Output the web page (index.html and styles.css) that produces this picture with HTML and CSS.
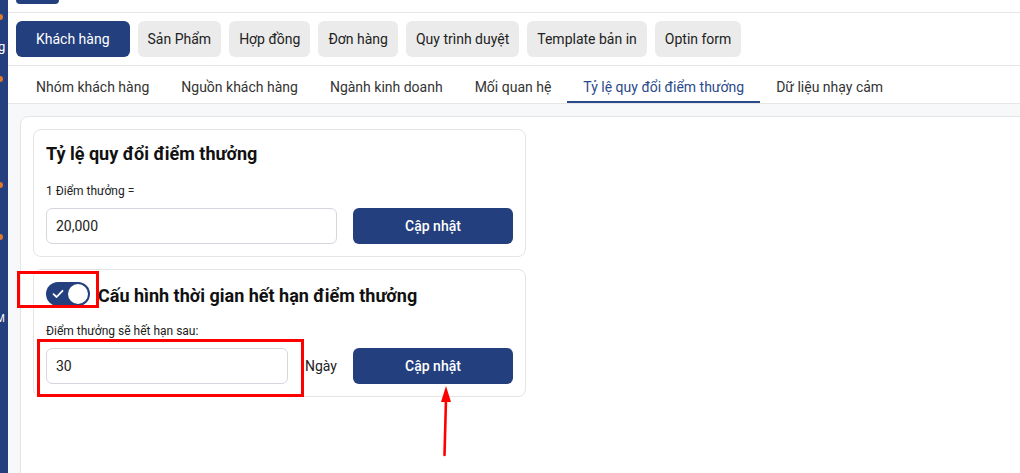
FILE: index.html
```html
<!DOCTYPE html>
<html lang="vi">
  <head>
    <meta charset="UTF-8" />
    <meta name="viewport" content="width=device-width, initial-scale=1.0" />
    <title>Tỷ lệ quy đổi điểm thưởng</title>
    <link rel="stylesheet" href="styles.css">
  </head>

  <body>
    <aside class="sidebar">
      <span class="dot dot-1"></span>
      <span class="side-letter side-g">g</span>
      <span class="dot dot-2"></span>
      <span class="dot dot-3"></span>
      <span class="dot dot-4"></span>
      <span class="side-letter side-m">M</span>
    </aside>

    <main class="main">
      <div class="topbar">
        <span class="top-btn"></span>
      </div>

      <!-- nhóm danh mục -->
      <nav class="tabs">
        <button type="button" class="tab on">Khách hàng</button>
        <button type="button" class="tab">Sản Phẩm</button>
        <button type="button" class="tab">Hợp đồng</button>
        <button type="button" class="tab">Đơn hàng</button>
        <button type="button" class="tab">Quy trình duyệt</button>
        <button type="button" class="tab">Template bản in</button>
        <button type="button" class="tab">Optin form</button>
      </nav>

      <ul class="subtabs">
        <li>Nhóm khách hàng</li>
        <li>Nguồn khách hàng</li>
        <li>Ngành kinh doanh</li>
        <li>Mối quan hệ</li>
        <li class="on">Tỷ lệ quy đổi điểm thưởng</li>
        <li>Dữ liệu nhạy cảm</li>
      </ul>

      <section class="content">
        <div class="panel">
          <div class="card">
            <h2 class="card-title">Tỷ lệ quy đổi điểm thưởng</h2>
            <p class="label">1 Điểm thưởng =</p>
            <div class="form-row">
              <input class="input" type="text" value="20,000" />
              <button type="button" class="btn-save">Cập nhật</button>
            </div>
          </div>

          <div class="card card-expire">
            <div class="card-head">
              <span class="switch">
                <svg class="switch-check" width="12" height="10" viewBox="0 0 12 10">
                  <path d="M1.5 5.2 L4.6 8 L10.5 1.8" fill="none" stroke="#fff" stroke-width="1.8" stroke-linecap="round" stroke-linejoin="round" />
                </svg>
                <span class="switch-knob"></span>
              </span>
              <h2 class="card-title">Cấu hình thời gian hết hạn điểm thưởng</h2>
            </div>
            <p class="label">Điểm thưởng sẽ hết hạn sau:</p>
            <div class="form-row">
              <input class="input" type="text" value="30" />
              <span class="unit">Ngày</span>
              <button type="button" class="btn-save">Cập nhật</button>
            </div>

            <!-- ghi chú -->
            <span class="mark mark-switch"></span>
            <span class="mark mark-input"></span>
            <svg class="arrow" width="20" height="76" viewBox="0 0 20 76">
              <path d="M10 1 L5 17 L15 17 Z" fill="#f00" />
              <path d="M10 14 L8.5 70" stroke="#f00" stroke-width="2.6" stroke-linecap="round" />
            </svg>
          </div>
        </div>
      </section>
    </main>
  </body>
</html>
```

FILE: styles.css
```css
html,
body {
  margin: 0;
  height: 100%;
  overflow: hidden;
}

body {
  display: flex;
  font-family: Roboto, "Noto Sans", Arial, sans-serif;
  color: #1f1f1f;
  background: #fff;
}

ul,
li,
p,
h2 {
  list-style: none;
  margin: 0;
  padding: 0;
}

button {
  cursor: pointer;
  border: none;
  font-family: inherit;
}

/* sidebar */
.sidebar {
  width: 8px;
  flex-shrink: 0;
  background: #233f7d;
  display: flex;
  flex-direction: column;
  overflow: hidden;
}

.dot {
  display: block;
  width: 3px;
  height: 6px;
  background: #e2762a;
  border-radius: 0 3px 3px 0;
}

.dot-1 { margin-top: 14px; }
.dot-2 { margin-top: 22px; }
.dot-3 { margin-top: 100px; }
.dot-4 { margin-top: 46px; }

.side-letter {
  color: #fff;
  font-size: 13px;
  line-height: 14px;
  margin-left: -2px;
}

.side-g { margin-top: 20px; }
.side-m {
  margin-top: 72px;
  font-size: 10px;
  margin-left: -4px;
}

.main {
  flex: 1;
  min-width: 0;
  display: flex;
  flex-direction: column;
}

/* top */
.topbar {
  height: 12px;
  border-bottom: 1px solid #e6e6e6;
  padding-left: 8px;
}

.top-btn {
  display: block;
  width: 43px;
  height: 4px;
  background: #233f7d;
  border-radius: 0 0 6px 6px;
}

.tabs {
  display: flex;
  gap: 8px;
  padding: 8px 8px;
  border-bottom: 1px solid #e6e6e6;
}

.tab {
  height: 36px;
  padding: 0 10px;
  border-radius: 6px;
  background: #ebebeb;
  color: #222;
  font-size: 14px;
}

.tab.on {
  padding: 0 20px;
  background: #233f7d;
  color: #fff;
}

.subtabs {
  display: flex;
  padding-left: 12px;
  border-bottom: 1px solid #e6e6e6;
}

.subtabs li {
  padding: 11px 16px 0;
  height: 24px;
  font-size: 14px;
  line-height: 20px;
  color: #333;
  border-bottom: 2px solid transparent;
}

.subtabs li.on {
  color: #2b4a8b;
  border-bottom-color: #2b4a8b;
}

/* content */
.content {
  flex: 1;
  background: #f7f8fa;
  padding: 12px 0 0 12px;
  overflow: hidden;
}

.panel {
  height: 100%;
  margin-right: -12px;
  background: #fff;
  border: 1px solid #e3e5ea;
  border-radius: 8px;
  padding: 12px;
}

.card {
  position: relative;
  width: 467px;
  padding: 12px;
  border: 1px solid #e5e5e5;
  border-radius: 8px;
}

.card + .card {
  margin-top: 12px;
}

.card-title {
  font-size: 18px;
  line-height: 24px;
  font-weight: 700;
  color: #111;
}

.label {
  margin-top: 16px;
  font-size: 12px;
  line-height: 18px;
  color: #222;
}

.form-row {
  display: flex;
  align-items: center;
  gap: 16px;
  margin-top: 8px;
}

.input {
  flex: 1;
  min-width: 0;
  height: 36px;
  box-sizing: border-box;
  padding: 0 9px;
  border: 1px solid #d6d7de;
  border-radius: 6px;
  font-family: inherit;
  font-size: 14px;
  color: #222;
  outline: none;
}

.unit {
  font-size: 14px;
  color: #222;
  margin-left: 1px;
}

.btn-save {
  width: 160px;
  height: 36px;
  border-radius: 6px;
  background: #233f7d;
  color: #fff;
  font-size: 14px;
  font-weight: 500;
}

/* toggle */
.card-head {
  display: flex;
  align-items: center;
  gap: 8px;
  height: 28px;
}

.card-head .card-title {
  line-height: 28px;
}

.card-expire .label {
  margin-top: 12px;
}

.switch {
  position: relative;
  width: 44px;
  height: 24px;
  margin-top: -4px;
  border-radius: 12px;
  background: #233f7d;
  flex-shrink: 0;
}

.switch-check {
  position: absolute;
  left: 6px;
  top: 7px;
}

.switch-knob {
  position: absolute;
  right: 2px;
  top: 2px;
  width: 20px;
  height: 20px;
  border-radius: 50%;
  background: #fff;
}

/* ghi chú đỏ */
.mark {
  position: absolute;
  border: 3px solid #f00;
  box-sizing: border-box;
}

.mark-switch {
  left: -17px;
  top: 1px;
  width: 82px;
  height: 37px;
}

.mark-input {
  left: 3px;
  top: 69px;
  width: 267px;
  height: 58px;
}

.arrow {
  position: absolute;
  left: 402px;
  top: 115px;
}
```
